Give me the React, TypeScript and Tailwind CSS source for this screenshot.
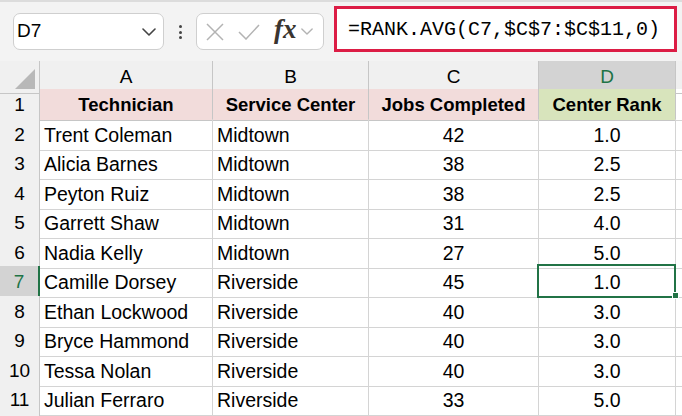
import React from "react";

const rows: [string, string, number, string][] = [
  ["Trent Coleman", "Midtown", 42, "1.0"],
  ["Alicia Barnes", "Midtown", 38, "2.5"],
  ["Peyton Ruiz", "Midtown", 38, "2.5"],
  ["Garrett Shaw", "Midtown", 31, "4.0"],
  ["Nadia Kelly", "Midtown", 27, "5.0"],
  ["Camille Dorsey", "Riverside", 45, "1.0"],
  ["Ethan Lockwood", "Riverside", 40, "3.0"],
  ["Bryce Hammond", "Riverside", 40, "3.0"],
  ["Tessa Nolan", "Riverside", 40, "3.0"],
  ["Julian Ferraro", "Riverside", 33, "5.0"],
];

const cols = ["A", "B", "C", "D"];

function Chevron({ className }: { className?: string }) {
  return (
    <svg className={className} viewBox="0 0 14 8" fill="none" stroke="currentColor" strokeWidth={1.6}>
      <path d="M1 1l6 6 6-6" strokeLinecap="round" strokeLinejoin="round" />
    </svg>
  );
}

export default function App() {
  const grid = "grid grid-cols-[40px_173px_156px_170px_137px_6px]";
  return (
    <div
      className="relative w-[682px] h-[416px] overflow-hidden bg-white text-black"
      style={{ fontFamily: '"Liberation Sans", Arial, sans-serif' }}
    >
      {/* formula bar */}
      <div className="h-[61px] bg-[#f3f3f3] border-t-2 border-[#dcdcdc] flex items-start relative">
        <div className="mt-[11px] ml-[13px] w-[151px] h-[37px] bg-white border border-[#cfcfcf] rounded-[7px] flex items-center pl-[3px] pr-[7px]">
          <span className="text-[19px] flex-1">D7</span>
          <Chevron className="w-[14px] h-[8px] text-[#444]" />
        </div>
        <div className="mt-[23px] ml-[15px] flex flex-col gap-[2.5px]">
          <span className="w-[3px] h-[3px] rounded-full bg-[#444]" />
          <span className="w-[3px] h-[3px] rounded-full bg-[#444]" />
          <span className="w-[3px] h-[3px] rounded-full bg-[#444]" />
        </div>
        <div className="mt-[11px] ml-[14px] w-[128px] h-[37px] bg-white border border-[#cfcfcf] rounded-[7px] flex items-center pl-[9px]">
          <svg className="w-[18px] h-[18px] text-[#b3b3b3]" viewBox="0 0 18 18" fill="none" stroke="currentColor" strokeWidth={1.5}>
            <path d="M1 1l16 16M17 1L1 17" />
          </svg>
          <svg className="ml-[14px] w-[22px] h-[16px] text-[#b3b3b3]" viewBox="0 0 22 16" fill="none" stroke="currentColor" strokeWidth={1.5}>
            <path d="M1 8l7 7L21 1" />
          </svg>
          <span
            className="ml-[14px] text-[27px] font-semibold italic leading-none text-[#3a3530] -mt-[5px]"
            style={{ fontFamily: '"Liberation Serif", "Times New Roman", serif' }}
          >
            fx
          </span>
          <Chevron className="ml-[4px] w-[12px] h-[7px] text-[#b3b3b3]" />
        </div>
        <div className="mt-[4px] ml-[10px] w-[343px] h-[46px] bg-white border-[3px] border-[#dc1d45] flex items-center pl-[11px] pt-[1px]">
          <span
            className="text-[20px]"
            style={{ fontFamily: '"Liberation Mono", "DejaVu Sans Mono", monospace' }}
          >
            =RANK.AVG(C7,$C$7:$C$11,0)
          </span>
        </div>
      </div>

      {/* column headers */}
      <div className={`${grid} h-[28px] bg-[#f0f0f0]`}>
        <div className="border-r border-b border-[#c6c6c6] relative">
          <svg className="absolute right-[4px] bottom-[4px] w-[20px] h-[20px]" viewBox="0 0 20 20">
            <path d="M20 0L20 20L0 20Z" fill="#b8b8b8" />
          </svg>
        </div>
        {cols.map((c) =>
          c === "D" ? (
            <div
              key={c}
              className="border-r border-[#c6c6c6] border-b-2 border-b-[#217346] bg-[#d3d3d3] text-[#217346] flex items-center justify-center text-[19px] pt-[2px]"
            >
              {c}
            </div>
          ) : (
            <div key={c} className="border-r border-b border-[#c6c6c6] flex items-center justify-center text-[19px] pt-[1px]">
              {c}
            </div>
          )
        )}
        <div className="border-b border-[#c6c6c6]" />
      </div>

      {/* header row 1 */}
      <div className={`${grid} h-[30px]`}>
        <div className="bg-[#f0f0f0] border-r border-b border-[#c6c6c6] flex items-center justify-center text-[19px] pt-[2px]">1</div>
        <div className="bg-[#f2dcdb] border-r border-b border-[#c6c6c6] flex items-center justify-center font-bold text-[18.5px] pt-[2px]">Technician</div>
        <div className="bg-[#f2dcdb] border-r border-b border-[#c6c6c6] flex items-center justify-center font-bold text-[18.5px] pt-[2px]">Service Center</div>
        <div className="bg-[#f2dcdb] border-r border-b border-[#c6c6c6] flex items-center justify-center font-bold text-[18.5px] pt-[2px]">Jobs Completed</div>
        <div className="bg-[#d8e4bc] border-r border-b border-[#c6c6c6] flex items-center justify-center font-bold text-[18.5px] pt-[2px]">Center Rank</div>
        <div className="border-b border-[#d4d4d4]" />
      </div>

      {rows.map((r, i) => {
        const n = i + 2;
        const sel = n === 7;
        const h = i % 2 === 0 ? "h-[29px]" : "h-[30px]";
        return (
          <div key={n} className={`${grid} ${h}`}>
            {sel ? (
              <div className="bg-[#d3d3d3] border-b border-[#c6c6c6] border-r-2 border-r-[#217346] text-[#217346] flex items-center justify-center text-[19px] pt-[2px]">
                {n}
              </div>
            ) : (
              <div className="bg-[#f0f0f0] border-r border-b border-[#c6c6c6] flex items-center justify-center text-[19px] pt-[2px]">
                {n}
              </div>
            )}
            <div className="border-r border-b border-[#d4d4d4] flex items-center pl-[4px] text-[19.5px] whitespace-nowrap pt-[2px]">{r[0]}</div>
            <div className="border-r border-b border-[#d4d4d4] flex items-center pl-[4px] text-[19.5px] pt-[2px]">{r[1]}</div>
            <div className="border-r border-b border-[#d4d4d4] flex items-center justify-center text-[19.5px] pt-[2px]">{r[2]}</div>
            <div className={`border-r border-b border-[#d4d4d4] flex items-center justify-center text-[19.5px] pt-[2px] relative ${sel ? "z-10" : ""}`}>
              {r[3]}
              {sel && <div className="absolute -left-[2px] -top-[2px] -right-[1px] -bottom-[1px] border-2 border-[#217346]" />}
            </div>
            <div className="border-b border-[#d4d4d4]" />
          </div>
        );
      })}
      <div className={`${grid} h-[10px]`}>
        <div className="bg-[#f0f0f0] border-r border-[#c6c6c6]" />
        <div className="border-r border-[#d4d4d4]" />
        <div className="border-r border-[#d4d4d4]" />
        <div className="border-r border-[#d4d4d4]" />
        <div className="border-r border-[#d4d4d4]" />
        <div />
      </div>
      {/* fill handle of the selected cell */}
      <div className="absolute left-[672px] top-[292px] w-[7px] h-[7px] bg-[#217346] border border-white z-20" />
    </div>
  );
}
